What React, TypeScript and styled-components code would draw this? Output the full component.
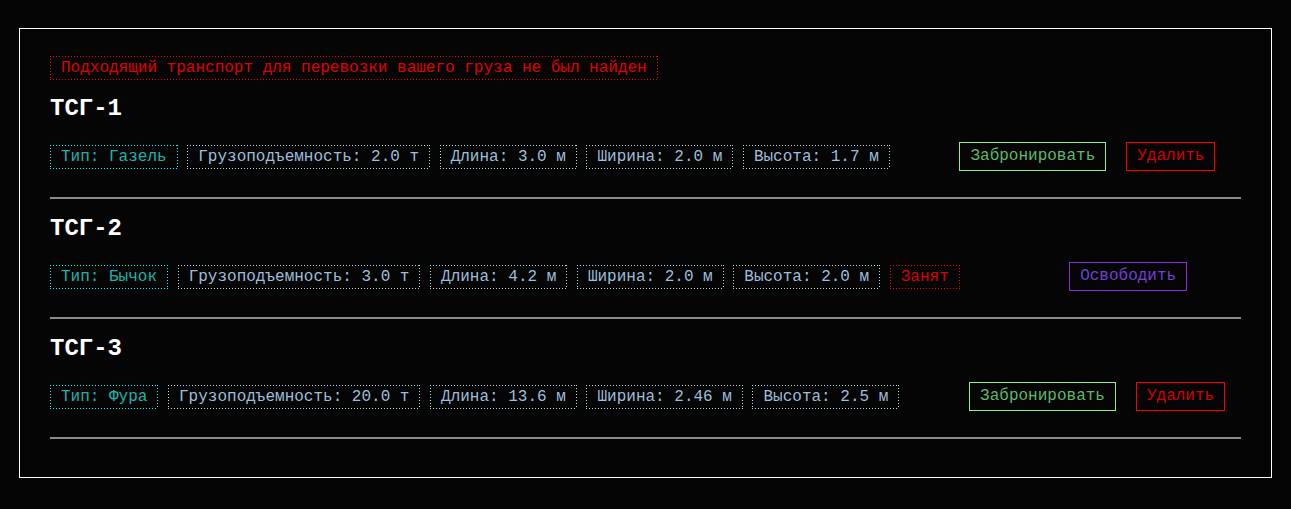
import React from "react";
import styled, { createGlobalStyle, css } from "styled-components";

const GlobalStyle = createGlobalStyle`
  html, body {
    margin: 0;
    padding: 0;
    background: #050505;
  }
  body {
    font-family: "Liberation Mono", "Courier New", monospace;
    font-size: 16px;
    color: #ffffff;
  }
`;

/* 1px dots with a 2px gap, as the reference draws its dotted frames */
const dotted = (c: string) => css`
  border: none;
  background:
    repeating-linear-gradient(to right, ${c} 0 1px, transparent 1px 3px) left top / 100% 1px no-repeat,
    repeating-linear-gradient(to right, ${c} 0 1px, transparent 1px 3px) left bottom / 100% 1px no-repeat,
    repeating-linear-gradient(to bottom, ${c} 0 1px, transparent 1px 3px) left top / 1px 100% no-repeat,
    repeating-linear-gradient(to bottom, ${c} 0 1px, transparent 1px 3px) right top / 1px 100% no-repeat;
`;

const Panel = styled.main`
  margin: 28px 19px;
  border: 1px solid #ffffff;
  padding: 27px 30px 38px;
`;

const Notice = styled.div`
  width: fit-content;
  ${dotted("#ff0000")}
  color: #e00000;
  padding: 3px 11px;
  line-height: 18px;
  margin-bottom: 15px;
`;

const Section = styled.section`
  display: flex;
  flex-direction: column;
`;

const Title = styled.h2`
  margin: 0 0 20px;
  font-size: 24px;
  line-height: 27px;
  font-weight: bold;
  color: #ffffff;
`;

const Row = styled.div`
  display: flex;
  align-items: center;
  height: 29px;
  margin-bottom: 26px;
`;

const Chips = styled.div`
  display: flex;
  gap: 9.6px;
`;

const toneBorder = { type: "#00ffff", spec: "#add8e6", busy: "#ff0000" };
const toneText = { type: "#20b2aa", spec: "#9cbedb", busy: "#dd0000" };

const Chip = styled.span<{ $tone: "type" | "spec" | "busy" }>`
  display: block;
  padding: 1px 11px;
  line-height: 22px;
  white-space: pre;
  ${(p) => dotted(toneBorder[p.$tone])}
  color: ${(p) => toneText[p.$tone]};
`;

const Actions = styled.div<{ $offset: number }>`
  display: flex;
  gap: 20px;
  margin-left: ${(p) => p.$offset}px;
`;

const kindBorder = { book: "#90ee90", delete: "#ff0000", free: "#8a2be2" };
const kindText = { book: "#5fb86a", delete: "#d40000", free: "#7440d4" };

const Button = styled.button<{ $kind: "book" | "delete" | "free" }>`
  font-family: inherit;
  font-size: 16px;
  height: 29px;
  line-height: 27px;
  padding: 0 10px;
  margin: 0;
  background: transparent;
  cursor: pointer;
  white-space: pre;
  border: 1px solid ${(p) => kindBorder[p.$kind]};
  color: ${(p) => kindText[p.$kind]};
`;

const Divider = styled.hr<{ $last?: boolean }>`
  height: 2px;
  border: none;
  background: #8a8a8a;
  margin: 0 0 ${(p) => (p.$last ? 0 : 16)}px;
`;

type Vehicle = {
  name: string;
  type: string;
  capacity: string;
  length: string;
  width: string;
  height: string;
  busy: boolean;
  offset: number;
};

const vehicles: Vehicle[] = [
  { name: "ТСГ-1", type: "Газель", capacity: "2.0", length: "3.0", width: "2.0", height: "1.7", busy: false, offset: 69.7 },
  { name: "ТСГ-2", type: "Бычок", capacity: "3.0", length: "4.2", width: "2.0", height: "2.0", busy: true, offset: 109.4 },
  { name: "ТСГ-3", type: "Фура", capacity: "20.0", length: "13.6", width: "2.46", height: "2.5", busy: false, offset: 69.8 },
];

export default function App() {
  return (
    <>
      <GlobalStyle />
      <Panel>
        <Notice>Подходящий транспорт для перевозки вашего груза не был найден</Notice>
        {vehicles.map((v, i) => (
          <Section key={v.name}>
            <Title>{v.name}</Title>
            <Row>
              <Chips>
                <Chip $tone="type">Тип: {v.type}</Chip>
                <Chip $tone="spec">Грузоподъемность: {v.capacity} т</Chip>
                <Chip $tone="spec">Длина: {v.length} м</Chip>
                <Chip $tone="spec">Ширина: {v.width} м</Chip>
                <Chip $tone="spec">Высота: {v.height} м</Chip>
                {v.busy && <Chip $tone="busy">Занят</Chip>}
              </Chips>
              <Actions $offset={v.offset}>
                {v.busy ? (
                  <Button $kind="free">Освободить</Button>
                ) : (
                  <>
                    <Button $kind="book">Забронировать</Button>
                    <Button $kind="delete">Удалить</Button>
                  </>
                )}
              </Actions>
            </Row>
            <Divider $last={i === vehicles.length - 1} />
          </Section>
        ))}
      </Panel>
    </>
  );
}
